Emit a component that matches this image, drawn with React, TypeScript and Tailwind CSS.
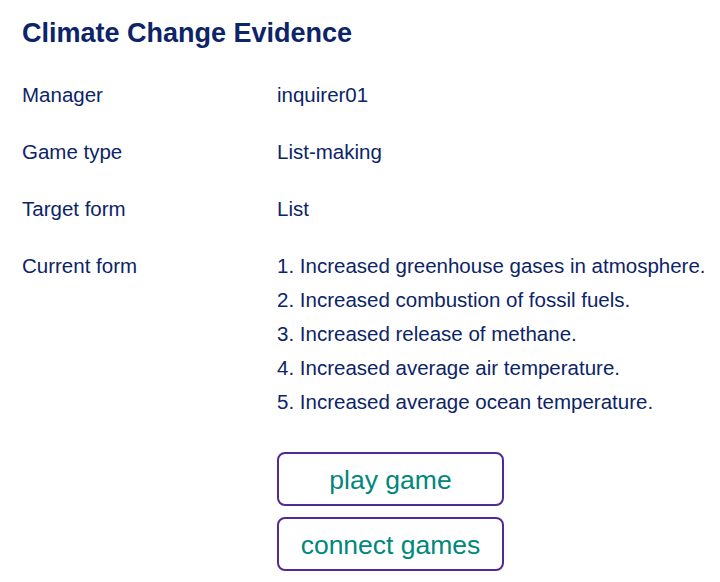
import React from 'react';

const rows: { label: string; value: string }[] = [
  { label: 'Manager', value: 'inquirer01' },
  { label: 'Game type', value: 'List-making' },
  { label: 'Target form', value: 'List' },
];

const items = [
  'Increased greenhouse gases in atmosphere.',
  'Increased combustion of fossil fuels.',
  'Increased release of methane.',
  'Increased average air temperature.',
  'Increased average ocean temperature.',
];

export default function App() {
  return (
    <div className="min-h-[582px] w-[720px] bg-white pl-[22px] pt-[17px] text-[#0c2468] font-['Liberation_Sans',Arial,sans-serif]">
      <h1 className="text-[27px] font-bold leading-[32px]">Climate Change Evidence</h1>

      <div className="mt-[29px] grid grid-cols-[255px_1fr] gap-y-[23px] text-[20.5px] leading-[34px]">
        {rows.map((r) => (
          <React.Fragment key={r.label}>
            <div>{r.label}</div>
            <div>{r.value}</div>
          </React.Fragment>
        ))}
        <div>Current form</div>
        <ol>
          {items.map((it, i) => (
            <li key={it}>
              {i + 1}. {it}
            </li>
          ))}
        </ol>
      </div>

      {/* Actions */}
      <div className="ml-[255px] mt-[33px] flex w-[227px] flex-col gap-[11px]">
        <button className="h-[54px] rounded-lg border-2 border-[#512a94] pt-[3px] text-[26.5px] text-[#00877c]">
          play game
        </button>
        <button className="h-[54px] rounded-lg border-2 border-[#512a94] pt-[3px] text-[26.5px] text-[#00877c]">
          connect games
        </button>
      </div>
    </div>
  );
}
